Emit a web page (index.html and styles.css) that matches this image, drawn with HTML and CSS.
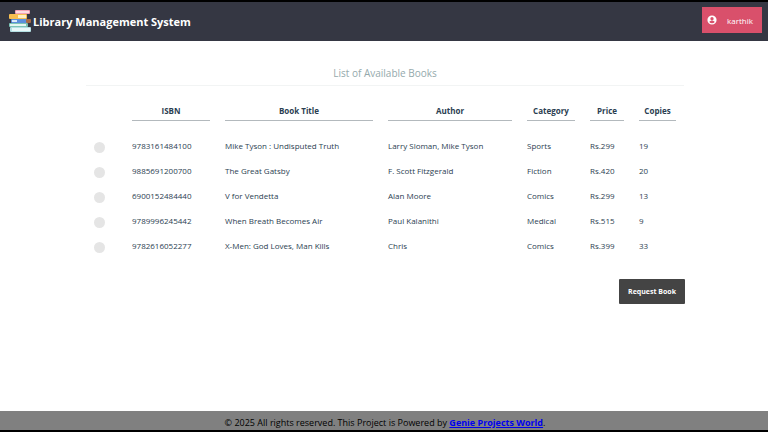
FILE: index.html
```html
<!DOCTYPE html>
<html lang="en">
<head>
    <meta charset="UTF-8">
    <meta name="viewport" content="width=device-width, initial-scale=1.0">
    <title>Library Management System</title>
    <link rel="stylesheet" href="styles.css">
</head>
<body>
    <header class="header">
        <div class="brand">
            <svg class="logo" viewBox="0 0 22 22" aria-hidden="true">
                <rect x="6" y="0" width="15" height="4" rx="1" fill="#f4a3b4"/>
                <rect x="7" y="1" width="13" height="2" fill="#fbdde2"/>
                <rect x="0" y="4" width="18" height="5" rx="1" fill="#f7bf50"/>
                <rect x="9" y="5" width="8" height="3" fill="#fdf0c4"/>
                <rect x="2" y="9" width="17" height="4" rx="1" fill="#5b8fdc"/>
                <rect x="3" y="10" width="5" height="2" fill="#dcebfa"/>
                <rect x="17" y="9" width="5" height="4" rx="1" fill="#a86a45"/>
                <rect x="0" y="13" width="19" height="4" rx="1" fill="#7cc4b6"/>
                <rect x="1" y="14" width="16" height="2" fill="#e6f7f2"/>
                <rect x="1" y="17" width="21" height="5" rx="1" fill="#b5e0e4"/>
                <rect x="3" y="18" width="18" height="3" fill="#e8f8f9"/>
            </svg>
            <h1 class="name">Library Management System</h1>
        </div>
        <button class="user" type="button">
            <svg class="user-icon" viewBox="0 0 24 24" aria-hidden="true">
                <path fill="currentColor" fill-rule="evenodd" d="M12 1a11 11 0 1 0 0 22 11 11 0 0 0 0-22zm0 4a4 4 0 1 1 0 8 4 4 0 0 1 0-8zm0 15a8 8 0 0 1-6.500-3.300c.1-2.100 4.300-3 6.500-3s6.400.9 6.500 3A8 8 0 0 1 12 20z"/>
            </svg>
            karthik
        </button>
    </header>

    <main class="main">
        <form>
            <h2 class="legend">List of Available Books</h2>
            <table class="books">
                <thead>
                    <tr>
                        <td class="col-pick"></td>
                        <th class="col-isbn">ISBN</th>
                        <th class="col-title">Book Title</th>
                        <th class="col-author">Author</th>
                        <th class="col-category">Category</th>
                        <th class="col-price">Price</th>
                        <th class="col-copies">Copies</th>
                    </tr>
                </thead>
                <tbody>
                    <tr>
                        <td><input type="radio" name="book" value="9783161484100" aria-label="Mike Tyson : Undisputed Truth"></td>
                        <td>9783161484100</td>
                        <td>Mike Tyson : Undisputed Truth</td>
                        <td>Larry Sloman, Mike Tyson</td>
                        <td>Sports</td>
                        <td>Rs.299</td>
                        <td>19</td>
                    </tr>
                    <tr>
                        <td><input type="radio" name="book" value="9885691200700" aria-label="The Great Gatsby"></td>
                        <td>9885691200700</td>
                        <td>The Great Gatsby</td>
                        <td>F. Scott Fitzgerald</td>
                        <td>Fiction</td>
                        <td>Rs.420</td>
                        <td>20</td>
                    </tr>
                    <tr>
                        <td><input type="radio" name="book" value="6900152484440" aria-label="V for Vendetta"></td>
                        <td>6900152484440</td>
                        <td>V for Vendetta</td>
                        <td>Alan Moore</td>
                        <td>Comics</td>
                        <td>Rs.299</td>
                        <td>13</td>
                    </tr>
                    <tr>
                        <td><input type="radio" name="book" value="9789996245442" aria-label="When Breath Becomes Air"></td>
                        <td>9789996245442</td>
                        <td>When Breath Becomes Air</td>
                        <td>Paul Kalanithi</td>
                        <td>Medical</td>
                        <td>Rs.515</td>
                        <td>9</td>
                    </tr>
                    <tr>
                        <td><input type="radio" name="book" value="9782616052277" aria-label="X-Men: God Loves, Man Kills"></td>
                        <td>9782616052277</td>
                        <td>X-Men: God Loves, Man Kills</td>
                        <td>Chris</td>
                        <td>Comics</td>
                        <td>Rs.399</td>
                        <td>33</td>
                    </tr>
                </tbody>
            </table>
            <div class="actions">
                <button class="request" type="submit">Request Book</button>
            </div>
        </form>
    </main>

    <footer class="footer">
        <p>© 2025 All rights reserved. This Project is Powered by <a href="#">Genie Projects World</a>.</p>
    </footer>
</body>
</html>
```

FILE: styles.css
```css
*{
    box-sizing: border-box;
}
body{
    display: flex;
    flex-direction: column;
    min-height: 100vh;
    margin: 0;
    border-top: 2px solid black;
    border-bottom: 2px solid black;
    background-color: white;
    color: #2b3e51;
    font-family: "Open Sans", sans-serif;
    font-size: 8px;
}
.header{
    display: flex;
    justify-content: space-between;
    align-items: center;
    padding: 5px 6px 8px 9px;
    background-color: #353743;
    color: white;
}
.brand{
    display: flex;
    align-items: center;
    gap: 2px;
    padding-top: 2px;
}
.logo{
    width: 22px;
    height: 22px;
}
.name{
    margin: 0;
    font-size: 11px;
    font-weight: bold;
}
.user{
    display: flex;
    align-items: center;
    gap: 10px;
    height: 26px;
    padding: 0 9px 0 5px;
    border: none;
    background-color: #d9506b;
    color: white;
    font-family: inherit;
    font-size: 8px;
    cursor: pointer;
}
.user-icon{
    width: 10px;
    height: 10px;
}
.main{
    flex: 1;
    width: 100%;
    max-width: 614px;
    margin: 0 auto;
    padding: 24px 0 24px 2px;
}
.legend{
    margin: 0 7px;
    padding-bottom: 4px;
    border-bottom: 1px solid #f2f4f4;
    color: #94a9ac;
    font-size: 10px;
    font-weight: normal;
    line-height: 16px;
    text-align: center;
}
.books{
    width: 100%;
    margin-top: 16px;
    border-spacing: 15px 0;
    table-layout: fixed;
}
.books td,
.books th{
    padding: 0;
}
.books th{
    height: 19px;
    padding-top: 3px;
    border-bottom: 1px solid #b3b9bd;
    text-align: center;
    vertical-align: top;
}
.books tbody td{
    height: 25px;
}
.books tbody::before{
    content: "";
    display: table-row;
    height: 12px;
}
.col-pick{
    width: 23px;
}
.col-isbn{
    width: 78px;
}
.col-author{
    width: 124px;
}
.col-category{
    width: 48px;
}
.col-price{
    width: 34px;
}
.col-copies{
    width: 37px;
}
.books input{
    display: block;
    width: 11px;
    height: 11px;
    margin: 3px 0 0;
    border-radius: 50%;
    background-color: #e5e5e5;
    appearance: none;
    cursor: pointer;
}
.books input:checked{
    background-color: #d9506b;
}
.actions{
    display: flex;
    justify-content: flex-end;
    margin: 21px 6px 0;
}
.request{
    height: 25px;
    padding: 0 9px;
    border: none;
    border-radius: 1px;
    background-color: #444444;
    color: white;
    font-family: inherit;
    font-size: 7px;
    font-weight: bold;
    cursor: pointer;
}
.footer{
    padding: 4px 0 0 2px;
    background-color: #808080;
    color: black;
    font-size: 9px;
    line-height: 15px;
    text-align: center;
}
.footer p{
    margin: 0;
}
.footer a{
    color: #0000ee;
    font-weight: bold;
}
```
